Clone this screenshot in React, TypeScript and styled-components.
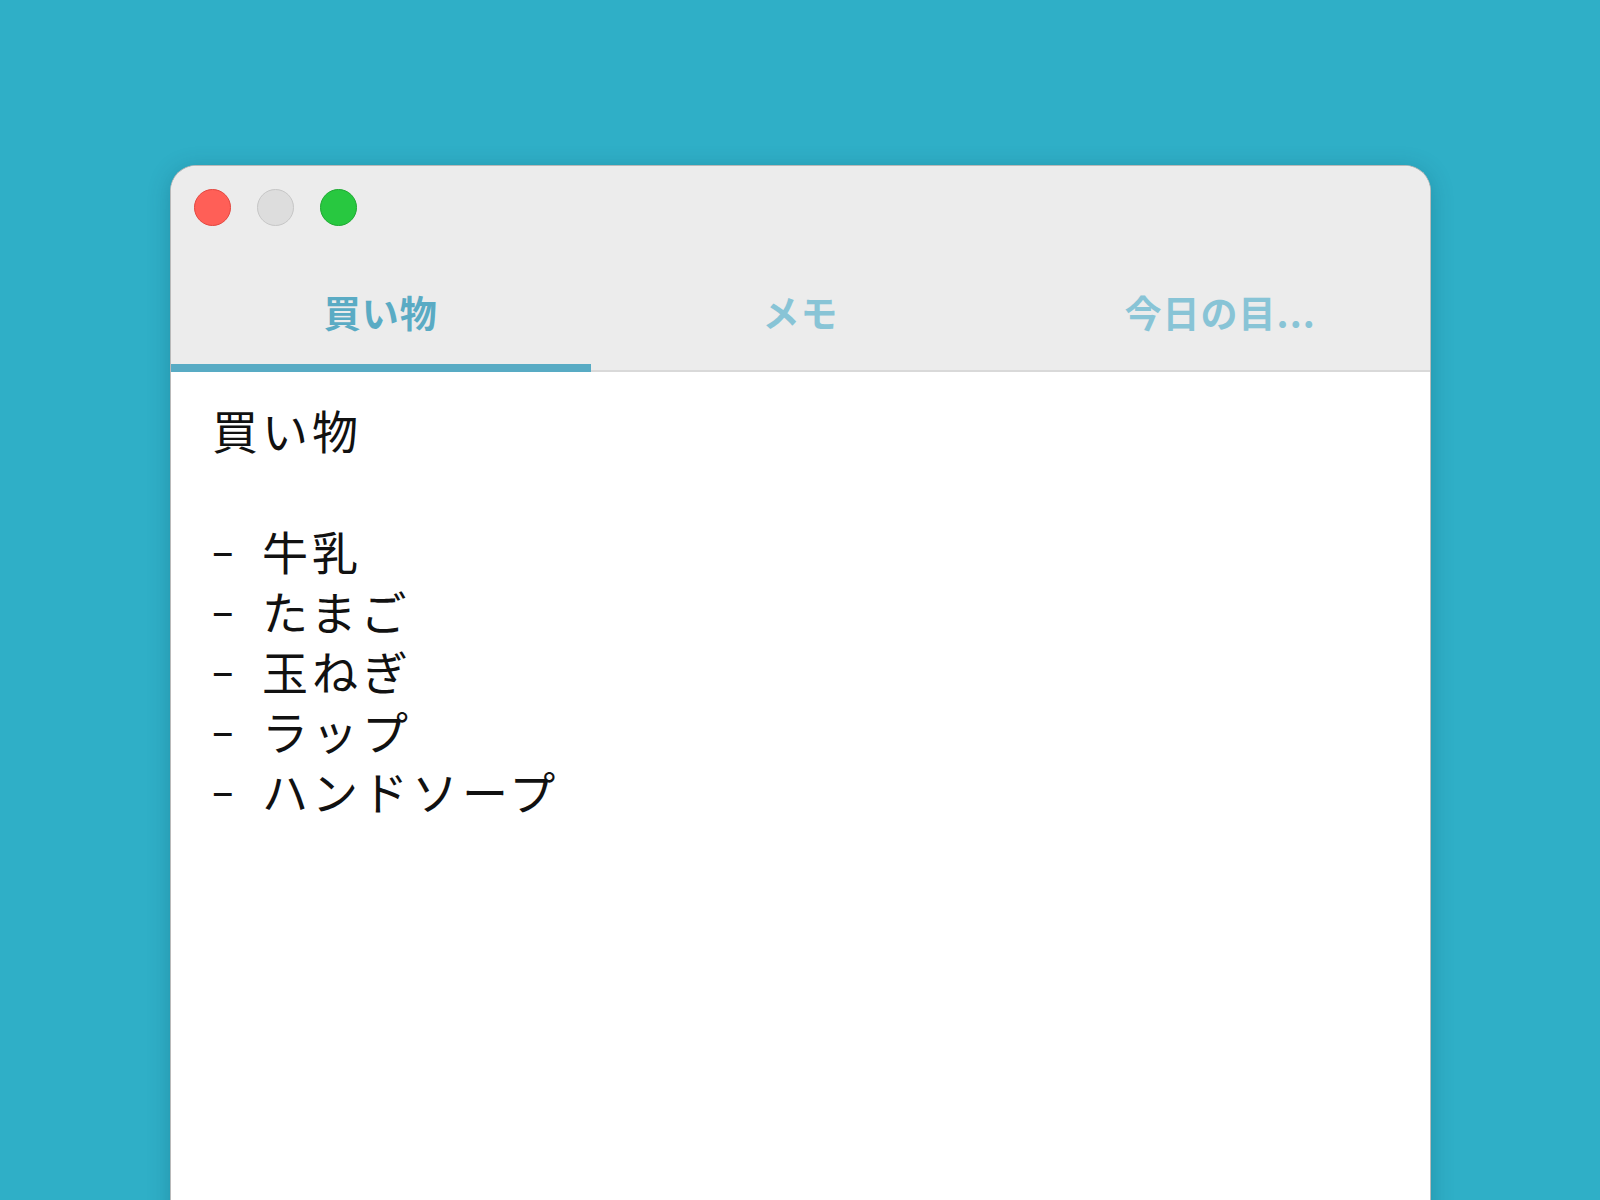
import * as React from 'react';
import styled, { createGlobalStyle } from 'styled-components';

const FONT_FAMILY = '"Noto Sans CJK JP", "Noto Sans", sans-serif';

const GlobalStyle = createGlobalStyle`
  html, body {
    margin: 0;
    padding: 0;
    height: 100%;
    overflow: hidden;
    background: #2fafc7;
  }
`;

const Page = styled.div`
  height: 1200px;
  padding: 165px 0 0 170px;
  box-sizing: border-box;
  background: #2fafc7;
`;

const Window = styled.div`
  width: 1261px;
  height: 1100px;
  display: flex;
  flex-direction: column;
  background: #ffffff;
  border: 1px solid #b9b9b9;
  border-bottom: none;
  border-radius: 26px 26px 0 0;
  box-shadow: 0 4px 22px rgba(0, 60, 80, 0.25);
  overflow: hidden;
  box-sizing: border-box;
  font-family: ${FONT_FAMILY};
`;

const TitleBar = styled.div`
  background: #ececec;
  display: flex;
  flex-direction: column;
`;

const Lights = styled.div`
  display: flex;
  gap: 26px;
  padding: 23px 0 0 23px;
  height: 65px;
`;

const Light = styled.span<{ $fill: string; $edge: string }>`
  width: 37px;
  height: 37px;
  border-radius: 50%;
  box-sizing: border-box;
  background: ${({ $fill }) => $fill};
  border: 1px solid ${({ $edge }) => $edge};
`;

const Tabs = styled.div`
  display: grid;
  grid-template-columns: repeat(3, 1fr);
  border-bottom: 2px solid #d9d9d9;
`;

const Tab = styled.div<{ $active?: boolean }>`
  position: relative;
  height: 116px;
  display: flex;
  align-items: center;
  justify-content: center;
  font-size: 37px;
  font-weight: 700;
  letter-spacing: 1px;
  color: ${({ $active }) => ($active ? '#5aabc4' : '#88c4d6')};

  &::after {
    content: '';
    position: absolute;
    left: 0;
    right: 0;
    bottom: -2px;
    height: 8px;
    background: ${({ $active }) => ($active ? '#58abc4' : 'transparent')};
  }
`;

const Content = styled.div`
  flex: 1;
  padding: 27px 41px;
  color: #111;
  font-size: 46px;
  line-height: 60px;
  letter-spacing: 4px;
`;

const Line = styled.div`
  height: 60px;
  white-space: pre;
`;

const Dash = styled.span`
  display: inline-block;
  width: 50px;
  font-size: 40px;
  font-weight: 500;
  letter-spacing: 0;
  vertical-align: 4px;
`;

const items = ['牛乳', 'たまご', '玉ねぎ', 'ラップ', 'ハンドソープ'];

export default function App() {
  return (
    <>
      <GlobalStyle />
      <Page>
        <Window>
          <TitleBar>
            <Lights>
              <Light $fill="#ff5f57" $edge="#e2463f" />
              <Light $fill="#dddddd" $edge="#c6c6c6" />
              <Light $fill="#28c840" $edge="#1ea932" />
            </Lights>
            <Tabs>
              <Tab $active>買い物</Tab>
              <Tab>メモ</Tab>
              <Tab>今日の目...</Tab>
            </Tabs>
          </TitleBar>
          <Content>
            <Line>買い物</Line>
            <Line />
            {items.map((item) => (
              <Line key={item}>
                <Dash>–</Dash>
                {item}
              </Line>
            ))}
          </Content>
        </Window>
      </Page>
    </>
  );
}
